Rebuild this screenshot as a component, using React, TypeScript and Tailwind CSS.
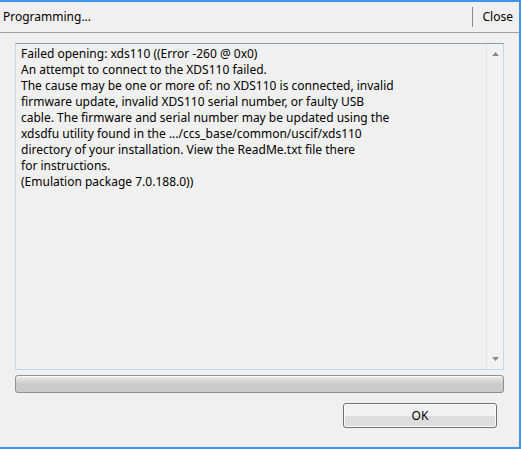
const lines = [
  "Failed opening: xds110 ((Error -260 @ 0x0)",
  "An attempt to connect to the XDS110 failed.",
  "The cause may be one or more of: no XDS110 is connected, invalid",
  "firmware update, invalid XDS110 serial number, or faulty USB",
  "cable. The firmware and serial number may be updated using the",
  "xdsdfu utility found in the .../ccs_base/common/uscif/xds110",
  "directory of your installation. View the ReadMe.txt file there",
  "for instructions.",
  "(Emulation package 7.0.188.0))",
];

export default function App() {
  return (
    <div
      className="w-[521px] h-[449px] bg-[#f0f0f0] border-t-2 border-r-2 border-b-2 border-[#3c96f0] flex flex-col text-black text-[12px]"
      style={{ fontFamily: '"Noto Sans", "Open Sans", sans-serif' }}
    >
      {/* title strip */}
      <div className="h-[31px] flex items-center border-b border-[#a0a0a0]">
        <span className="flex-1 pl-[3px] text-[12px]">Programming...</span>
        <span className="h-[20px] w-px bg-[#8a8a8a]" />
        <span className="pl-[10px] pr-[6px] text-[12px]">Close</span>
      </div>

      <div className="flex flex-col px-[15px] pt-[10px]">
        {/* message box */}
        <div className="h-[327px] flex border border-[#c5d8ea] border-t-[#7f9db9]">
          <div className="flex-1 pl-[5px] pt-[2px] leading-[16px]">
            {lines.map((l) => (
              <div key={l} className="whitespace-pre">
                {l}
              </div>
            ))}
          </div>
          <div className="w-[17px] flex flex-col items-center justify-between border-l border-[#e2e2e2] bg-[#f2f2f2] py-[8px]">
            <svg width="7" height="4" viewBox="0 0 7 4">
              <path d="M0 4 L3.5 0 L7 4 Z" fill="#8a8a8a" />
            </svg>
            <svg width="7" height="4" viewBox="0 0 7 4">
              <path d="M0 0 L3.5 4 L7 0 Z" fill="#8a8a8a" />
            </svg>
          </div>
        </div>

        {/* progress bar */}
        <div className="mt-[5px] h-[18px] rounded-[3px] border border-[#909090] bg-gradient-to-b from-[#ececec] via-[#cbcbcb] to-[#c9c9c9] shadow-[inset_0_1px_0_#fafafa]" />

        {/* button row */}
        <div className="flex justify-end pr-[7px] pt-[10px]">
          <button className="w-[154px] h-[25px] rounded-[3px] border border-[#707070] bg-gradient-to-b from-[#f2f2f2] from-50% to-[#dddddd] to-50% text-[12px] shadow-[inset_0_0_0_1px_#fcfcfc]">
            OK
          </button>
        </div>
      </div>
    </div>
  );
}
